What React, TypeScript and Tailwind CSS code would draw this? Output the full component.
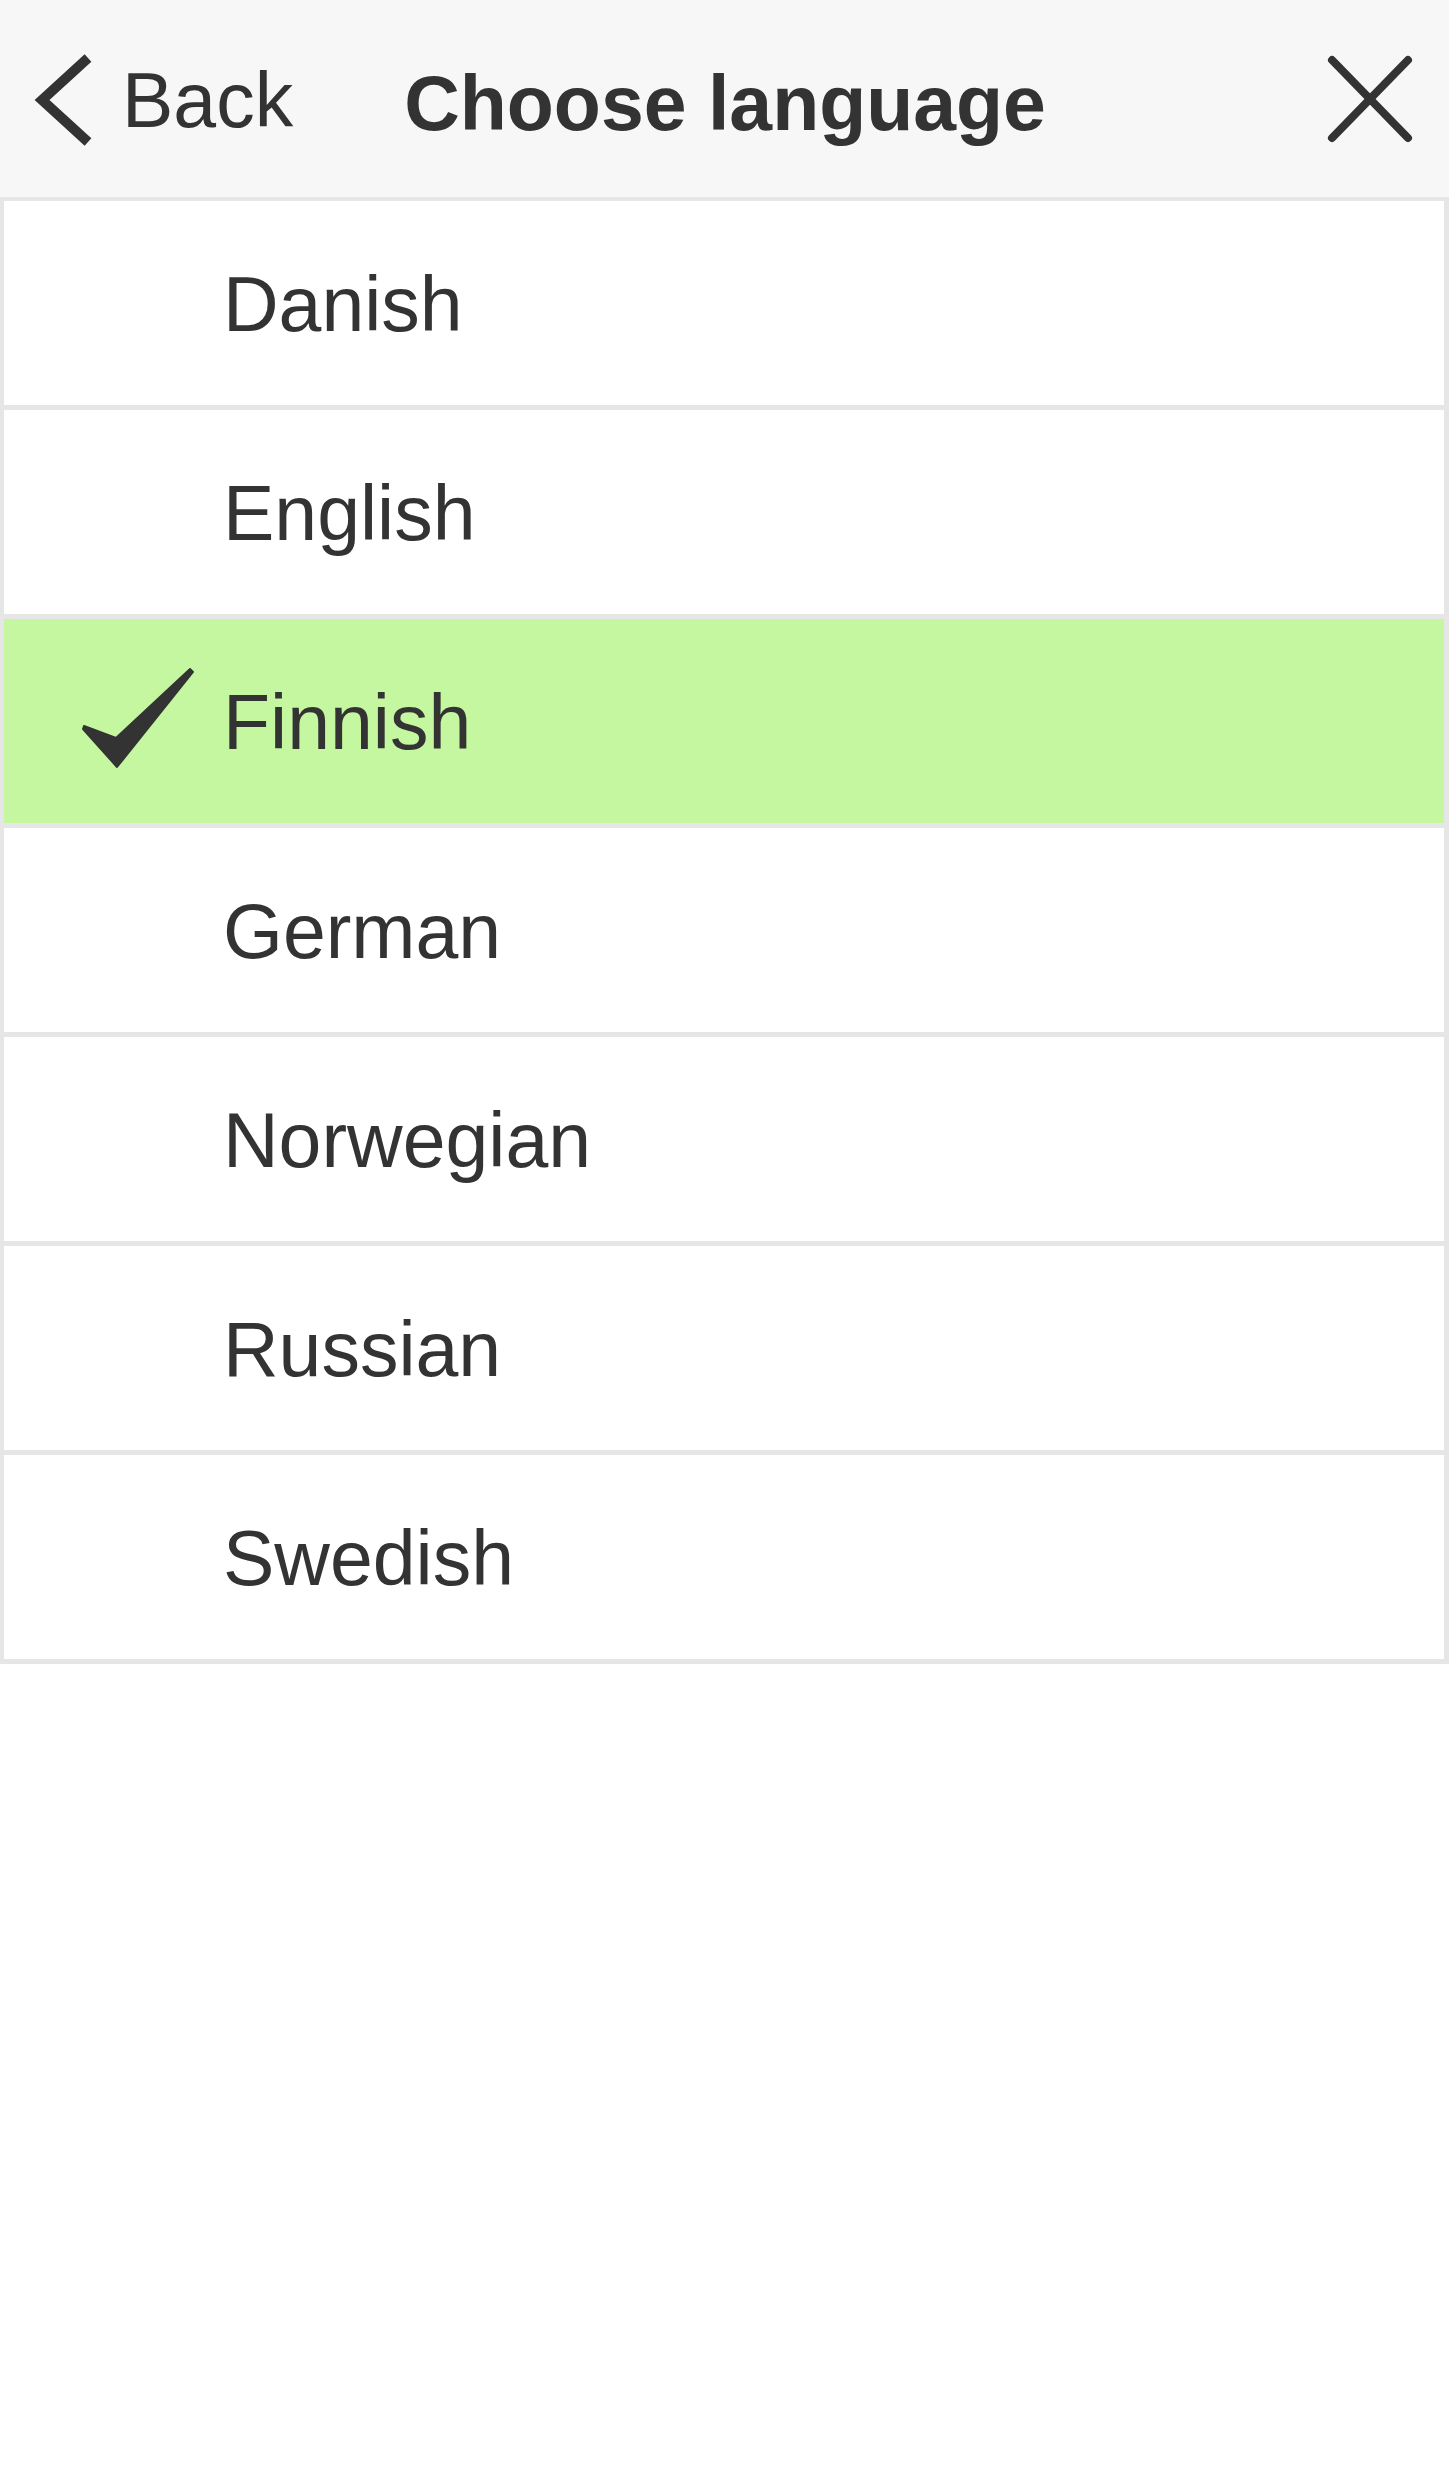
import React from "react";

const languages = ["Danish", "English", "Finnish", "German", "Norwegian", "Russian", "Swedish"];
const selected = "Finnish";

const App: React.FC = () => {
  return (
    <div className="min-h-[2481px] w-full bg-white text-[#333333] font-['Liberation_Sans',Arial,sans-serif]">
      {/* Header */}
      <header className="flex h-[197px] items-start bg-[#f7f7f7]">
        <svg className="ml-[30px] mt-[50px] shrink-0" width="64" height="100" viewBox="0 0 64 100">
          <polyline points="58,8 12,50 58,92" fill="none" stroke="#333333" strokeWidth="10" />
        </svg>
        <span className="ml-[28px] mt-[56px] text-[77px] leading-[88px] whitespace-nowrap">Back</span>
        <span className="ml-[111px] mt-[59px] text-[77px] leading-[88px] font-bold whitespace-nowrap">
          Choose language
        </span>
        <svg className="ml-auto mr-[35px] mt-[54px] shrink-0" width="88" height="90" viewBox="0 0 88 90">
          <line x1="6" y1="6" x2="82" y2="84" stroke="#333333" strokeWidth="8" strokeLinecap="round" />
          <line x1="82" y1="6" x2="6" y2="84" stroke="#333333" strokeWidth="8" strokeLinecap="round" />
        </svg>
      </header>

      {/* Language list */}
      <ul className="border-t-4 border-l-4 border-r-[5px] border-[#e6e6e6]">
        {languages.map((lang) => (
          <LanguageRow key={lang} name={lang} active={lang === selected} />
        ))}
      </ul>
    </div>
  );
};

interface LanguageRowProps {
  name: string;
  active: boolean;
}

const LanguageRow: React.FC<LanguageRowProps> = ({ name, active }) => {
  return (
    <li
      className={
        "flex h-[209px] border-b-[5px] border-[#e6e6e6] " + (active ? "bg-[#c4f79f]" : "bg-white")
      }
    >
      <div className="w-[219px] shrink-0">
        {active && (
          <svg className="ml-[76px] mt-[46px]" width="116" height="104" viewBox="0 0 116 104">
            <polygon
              points="4,61 36,73 110,4 113,7 37,102 3,64"
              fill="#333333"
              stroke="#333333"
              strokeWidth="2"
              strokeLinejoin="round"
            />
          </svg>
        )}
      </div>
      <span className="pt-[59px] text-[77px] leading-[88px]">{name}</span>
    </li>
  );
};

export default App;
